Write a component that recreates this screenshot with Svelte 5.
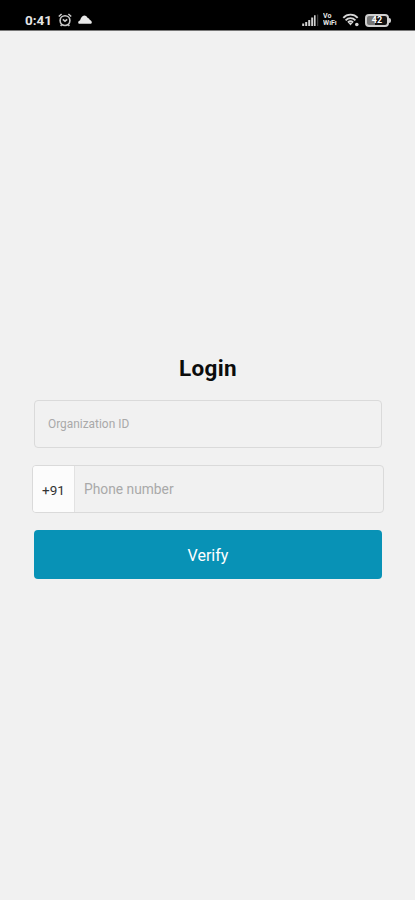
<script lang="ts">
    let organization = $state("");
    let phone = $state("");
</script>

<div class="screen">
    <header class="status-bar">
        <div class="status-left">
            <span class="time">0:41</span>
            <svg class="alarm" width="14" height="14" viewBox="0 0 14 14">
                <circle cx="7" cy="7.6" r="4.9" />
                <path d="M.8 3.5 3.6 1M13.2 3.5 10.4 1M4.8 6.4 7 8.2 9.2 6.4M3.7 11.6 2.7 13M10.3 11.6l1 1.4" />
            </svg>
            <svg class="cloud" width="14" height="9" viewBox="0 0 14 9">
                <path d="M1.6 8.8C.7 8.8.2 8.2.2 7.4c0-.9.7-1.4 1.8-1.8C2.9 2.6 4.2.4 6.2.4c1.8 0 2.8 1.1 3.5 2.7 1.3.1 1.8.9 2.1 2 1.2.4 2 1.2 2 2.2s-.6 1.5-1.6 1.5z" />
            </svg>
        </div>
        <div class="status-right">
            <svg class="signal" width="17" height="12" viewBox="0 0 17 12">
                <path d="M.2 9.6h2V12h-2zM3.2 8h2v4h-2zM6.2 6h2v6h-2zM9.2 3.6h2V12h-2zM12 1.2h1.6V12H12z" />
                <path class="faint" d="M15 .5h1.2V12H15z" />
            </svg>
            <span class="vowifi"><span>Vo</span><span>WiFi</span></span>
            <svg class="wifi" width="18" height="14" viewBox="0 0 18 14">
                <path d="M1.3 4.8C5.2.6 11.8.6 15.7 4.8M3.6 7.3C6.4 4.4 10.6 4.4 13.4 7.3M5.9 9.5c1.6-1.4 3.6-1.4 5.2 0" />
                <path class="fill" d="M6.3 9.8h4.4L8.5 12.6z" />
                <circle class="fill" cx="14.8" cy="11.5" r="1.8" />
            </svg>
            <span class="battery"><span class="level">42</span></span>
        </div>
    </header>

    <main>
        <h1>Login</h1>
        <form>
            <input class="field organization" type="text" placeholder="Organization ID" bind:value={organization} />
            <div class="field phone">
                <span class="code">+91</span>
                <input type="tel" placeholder="Phone number" bind:value={phone} />
            </div>
            <button type="button">Verify</button>
        </form>
    </main>
</div>

<style>
    :global(body) {
        background: #f1f1f1;
    }

    .screen {
        min-height: 100vh;
        background: #f1f1f1;
        font-family: Roboto, "Liberation Sans", sans-serif;
    }

    .status-bar {
        display: flex;
        justify-content: space-between;
        box-sizing: border-box;
        height: 31px;
        padding: 9px 24px 0 25px;
        background: #000;
        border-bottom: 1px solid #777;
        color: #e4e4e4;
    }

    .status-left,
    .status-right {
        display: flex;
        align-items: center;
        height: 22px;
    }

    .time {
        width: 27px;
        font-size: 13.5px;
        font-weight: 700;
    }

    .alarm {
        margin-left: 6px;
        fill: none;
        stroke: #c9c9c9;
        stroke-width: 1.6;
    }

    .cloud {
        margin: -2px 0 0 6px;
        fill: #e8e8e8;
    }

    .signal {
        margin-right: 4px;
        fill: #cfcfcf;
    }

    .signal .faint {
        fill: #3c3c3c;
    }

    .vowifi {
        display: flex;
        flex-direction: column;
        gap: 1px;
        width: 16px;
        margin: -1px 3px 0 0;
        font-size: 7px;
        font-weight: 700;
        line-height: 6px;
    }

    .vowifi span {
        height: 6px;
        overflow: hidden;
    }

    .wifi {
        margin-right: 5px;
        fill: none;
        stroke: #d6d6d6;
        stroke-width: 1.9;
    }

    .wifi .fill {
        fill: #d6d6d6;
        stroke: none;
    }

    .battery {
        display: flex;
        align-items: center;
    }

    .battery::after {
        content: "";
        width: 2px;
        height: 5px;
        background: #cfcfcf;
        border-radius: 0 2px 2px 0;
    }

    .level {
        box-sizing: border-box;
        width: 24px;
        height: 13px;
        border: 2px solid #cfcfcf;
        border-radius: 4px;
        background: linear-gradient(to right, #777 38%, #111 38%);
        color: #fff;
        font-size: 9px;
        font-weight: 700;
        line-height: 9px;
        text-align: center;
    }

    main {
        padding: 322px 33px 0 34px;
    }

    h1 {
        margin: 0 0 16px;
        color: #0c0c0c;
        font-size: 22.5px;
        font-weight: 700;
        letter-spacing: 0.3px;
        line-height: 31px;
        text-align: center;
    }

    form {
        display: flex;
        flex-direction: column;
    }

    .field {
        box-sizing: border-box;
        height: 48px;
        border: 1px solid #dadada;
        border-radius: 4px;
        background: #f1f1f1;
    }

    input {
        font-family: inherit;
        color: #222;
        outline: none;
    }

    input::placeholder {
        color: #a9a9a9;
        opacity: 1;
    }

    .organization {
        padding: 0 13px;
        font-size: 11.9px;
    }

    .phone {
        display: flex;
        margin: 17px -2px 17px -2px;
        overflow: hidden;
    }

    .code {
        box-sizing: border-box;
        width: 42px;
        border-right: 1px solid #e2e2e2;
        background: #fcfcfc;
        color: #333;
        font-size: 13.5px;
        line-height: 48px;
        text-align: center;
    }

    .phone input {
        flex: 1;
        min-width: 0;
        padding: 0 9px;
        border: 0;
        background: transparent;
        font-size: 13.8px;
    }

    button {
        height: 49px;
        padding: 2px 0 0;
        border: 0;
        border-radius: 4px;
        background: #0892b6;
        color: #fff;
        font-family: inherit;
        font-size: 16px;
    }
</style>
